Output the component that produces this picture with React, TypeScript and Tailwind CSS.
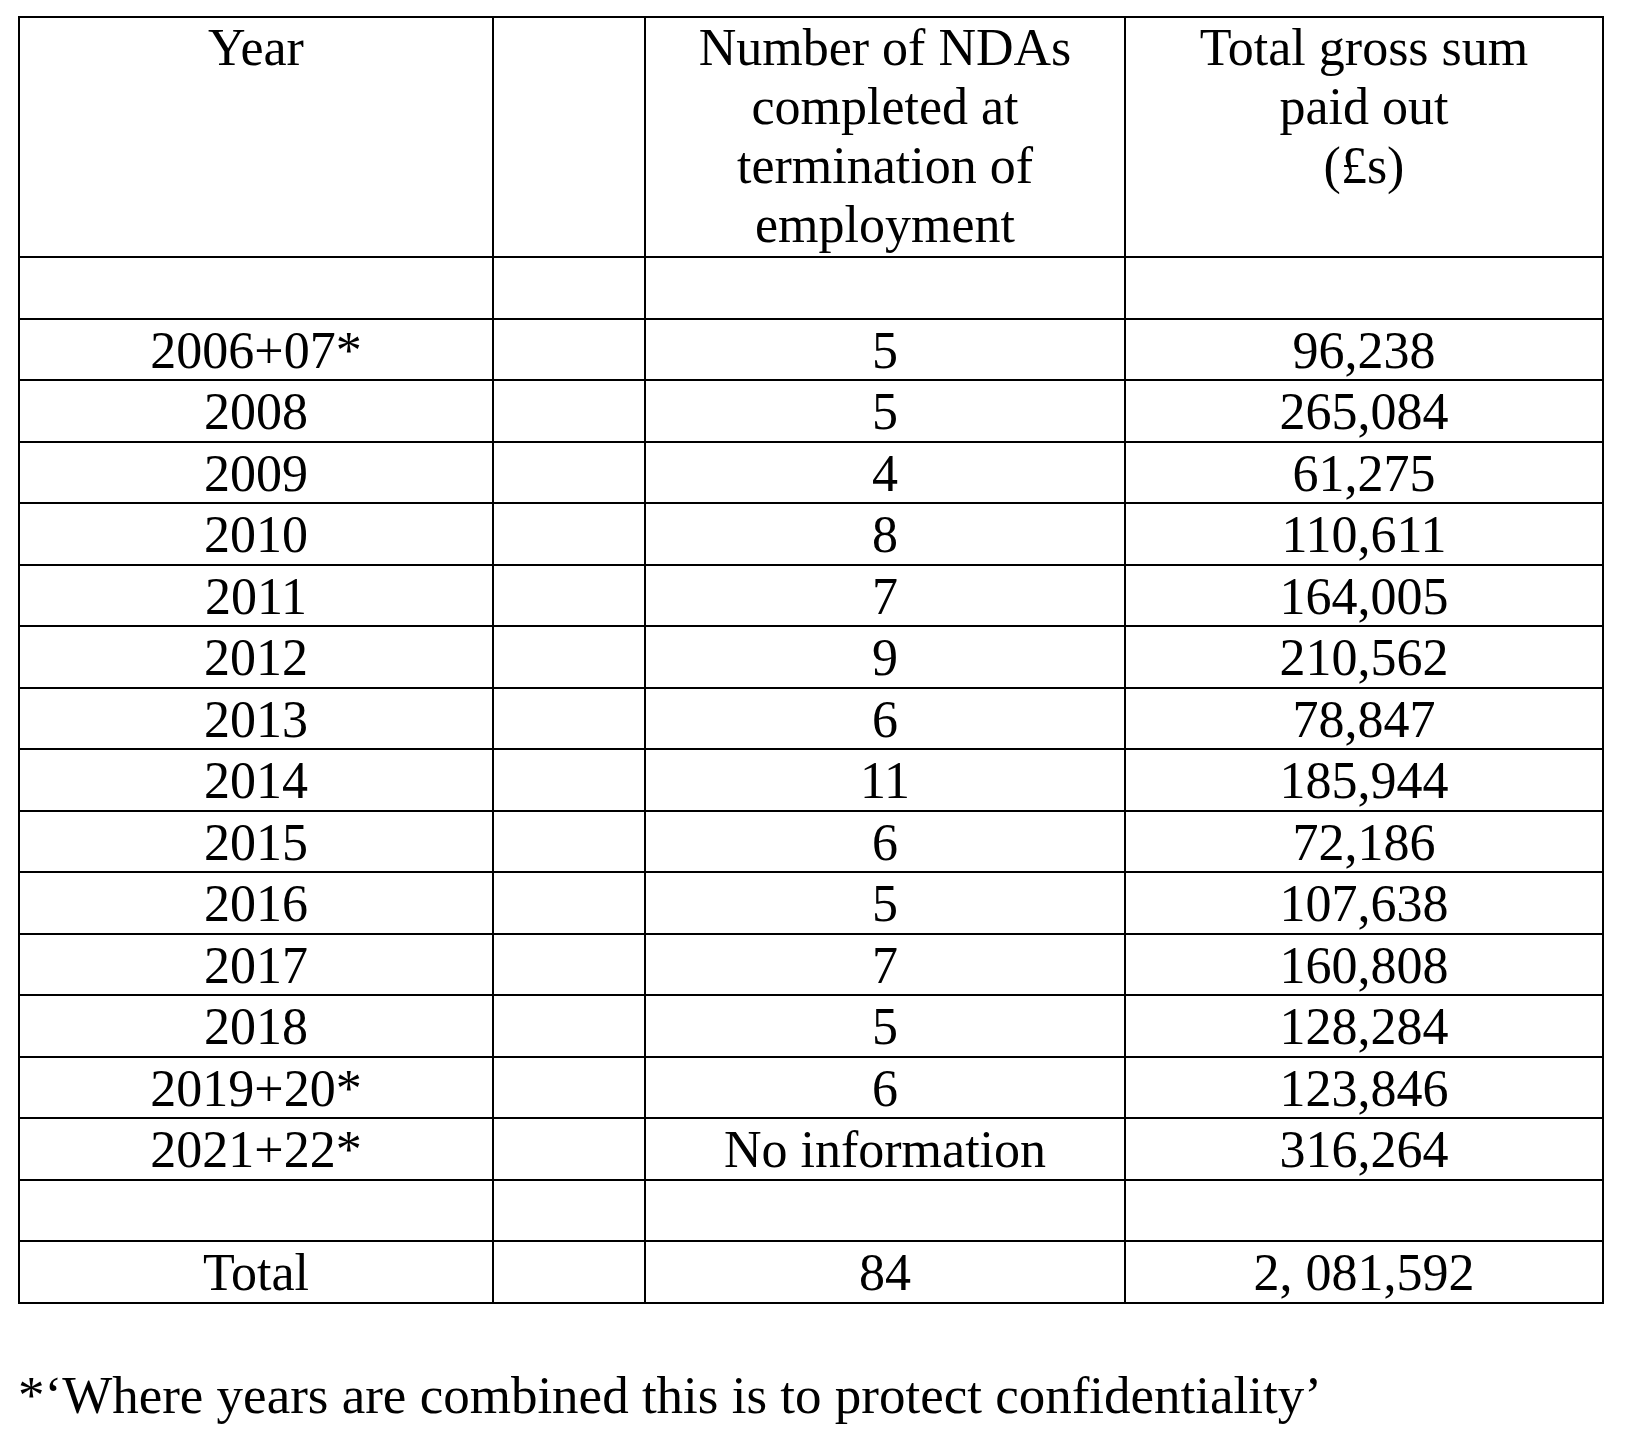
const ROWS: [string, string, string][] = [
  ["", "", ""],
  ["2006+07*", "5", "96,238"],
  ["2008", "5", "265,084"],
  ["2009", "4", "61,275"],
  ["2010", "8", "110,611"],
  ["2011", "7", "164,005"],
  ["2012", "9", "210,562"],
  ["2013", "6", "78,847"],
  ["2014", "11", "185,944"],
  ["2015", "6", "72,186"],
  ["2016", "5", "107,638"],
  ["2017", "7", "160,808"],
  ["2018", "5", "128,284"],
  ["2019+20*", "6", "123,846"],
  ["2021+22*", "No information", "316,264"],
  ["", "", ""],
  ["Total", "84", "2, 081,592"],
];

// column widths measured from line to line (left border included)
const cols = "grid-cols-[474px_152px_480px_478px]";

function HeadCell({ lines }: { lines: string[] }) {
  return (
    <div className="h-[240px] border-l-2 border-t-2 border-black text-center">
      {lines.map((l) => (
        <div key={l}>{l}</div>
      ))}
    </div>
  );
}

function Cell({ text }: { text: string }) {
  return (
    <div className="flex h-[61.5px] items-center justify-center border-l-2 border-t-2 border-black pt-[3px] leading-[50px]">
      {text}
    </div>
  );
}

export default function App() {
  return (
    <div
      className="min-h-screen w-[1626px] bg-white text-black"
      style={{ fontFamily: '"Liberation Serif", "Times New Roman", serif' }}
    >
      <div className="pl-[18px] pt-[16px]">
        <div className={`grid ${cols} w-[1586px] border-b-2 border-r-2 border-black text-[52px] leading-[59px]`}>
          {/* header */}
          <HeadCell lines={["Year"]} />
          <HeadCell lines={[]} />
          <HeadCell lines={["Number of NDAs", "completed at", "termination of", "employment"]} />
          <HeadCell lines={["Total gross sum", "paid out", "(£s)"]} />

          {ROWS.map((r, i) => (
            <div key={i} className="contents">
              <Cell text={r[0]} />
              <Cell text="" />
              <Cell text={r[1]} />
              <Cell text={r[2]} />
            </div>
          ))}
        </div>

        <p className="mt-[62px] text-[53px] leading-[59px]">
          *‘Where years are combined this is to protect confidentiality’
        </p>
      </div>
    </div>
  );
}
